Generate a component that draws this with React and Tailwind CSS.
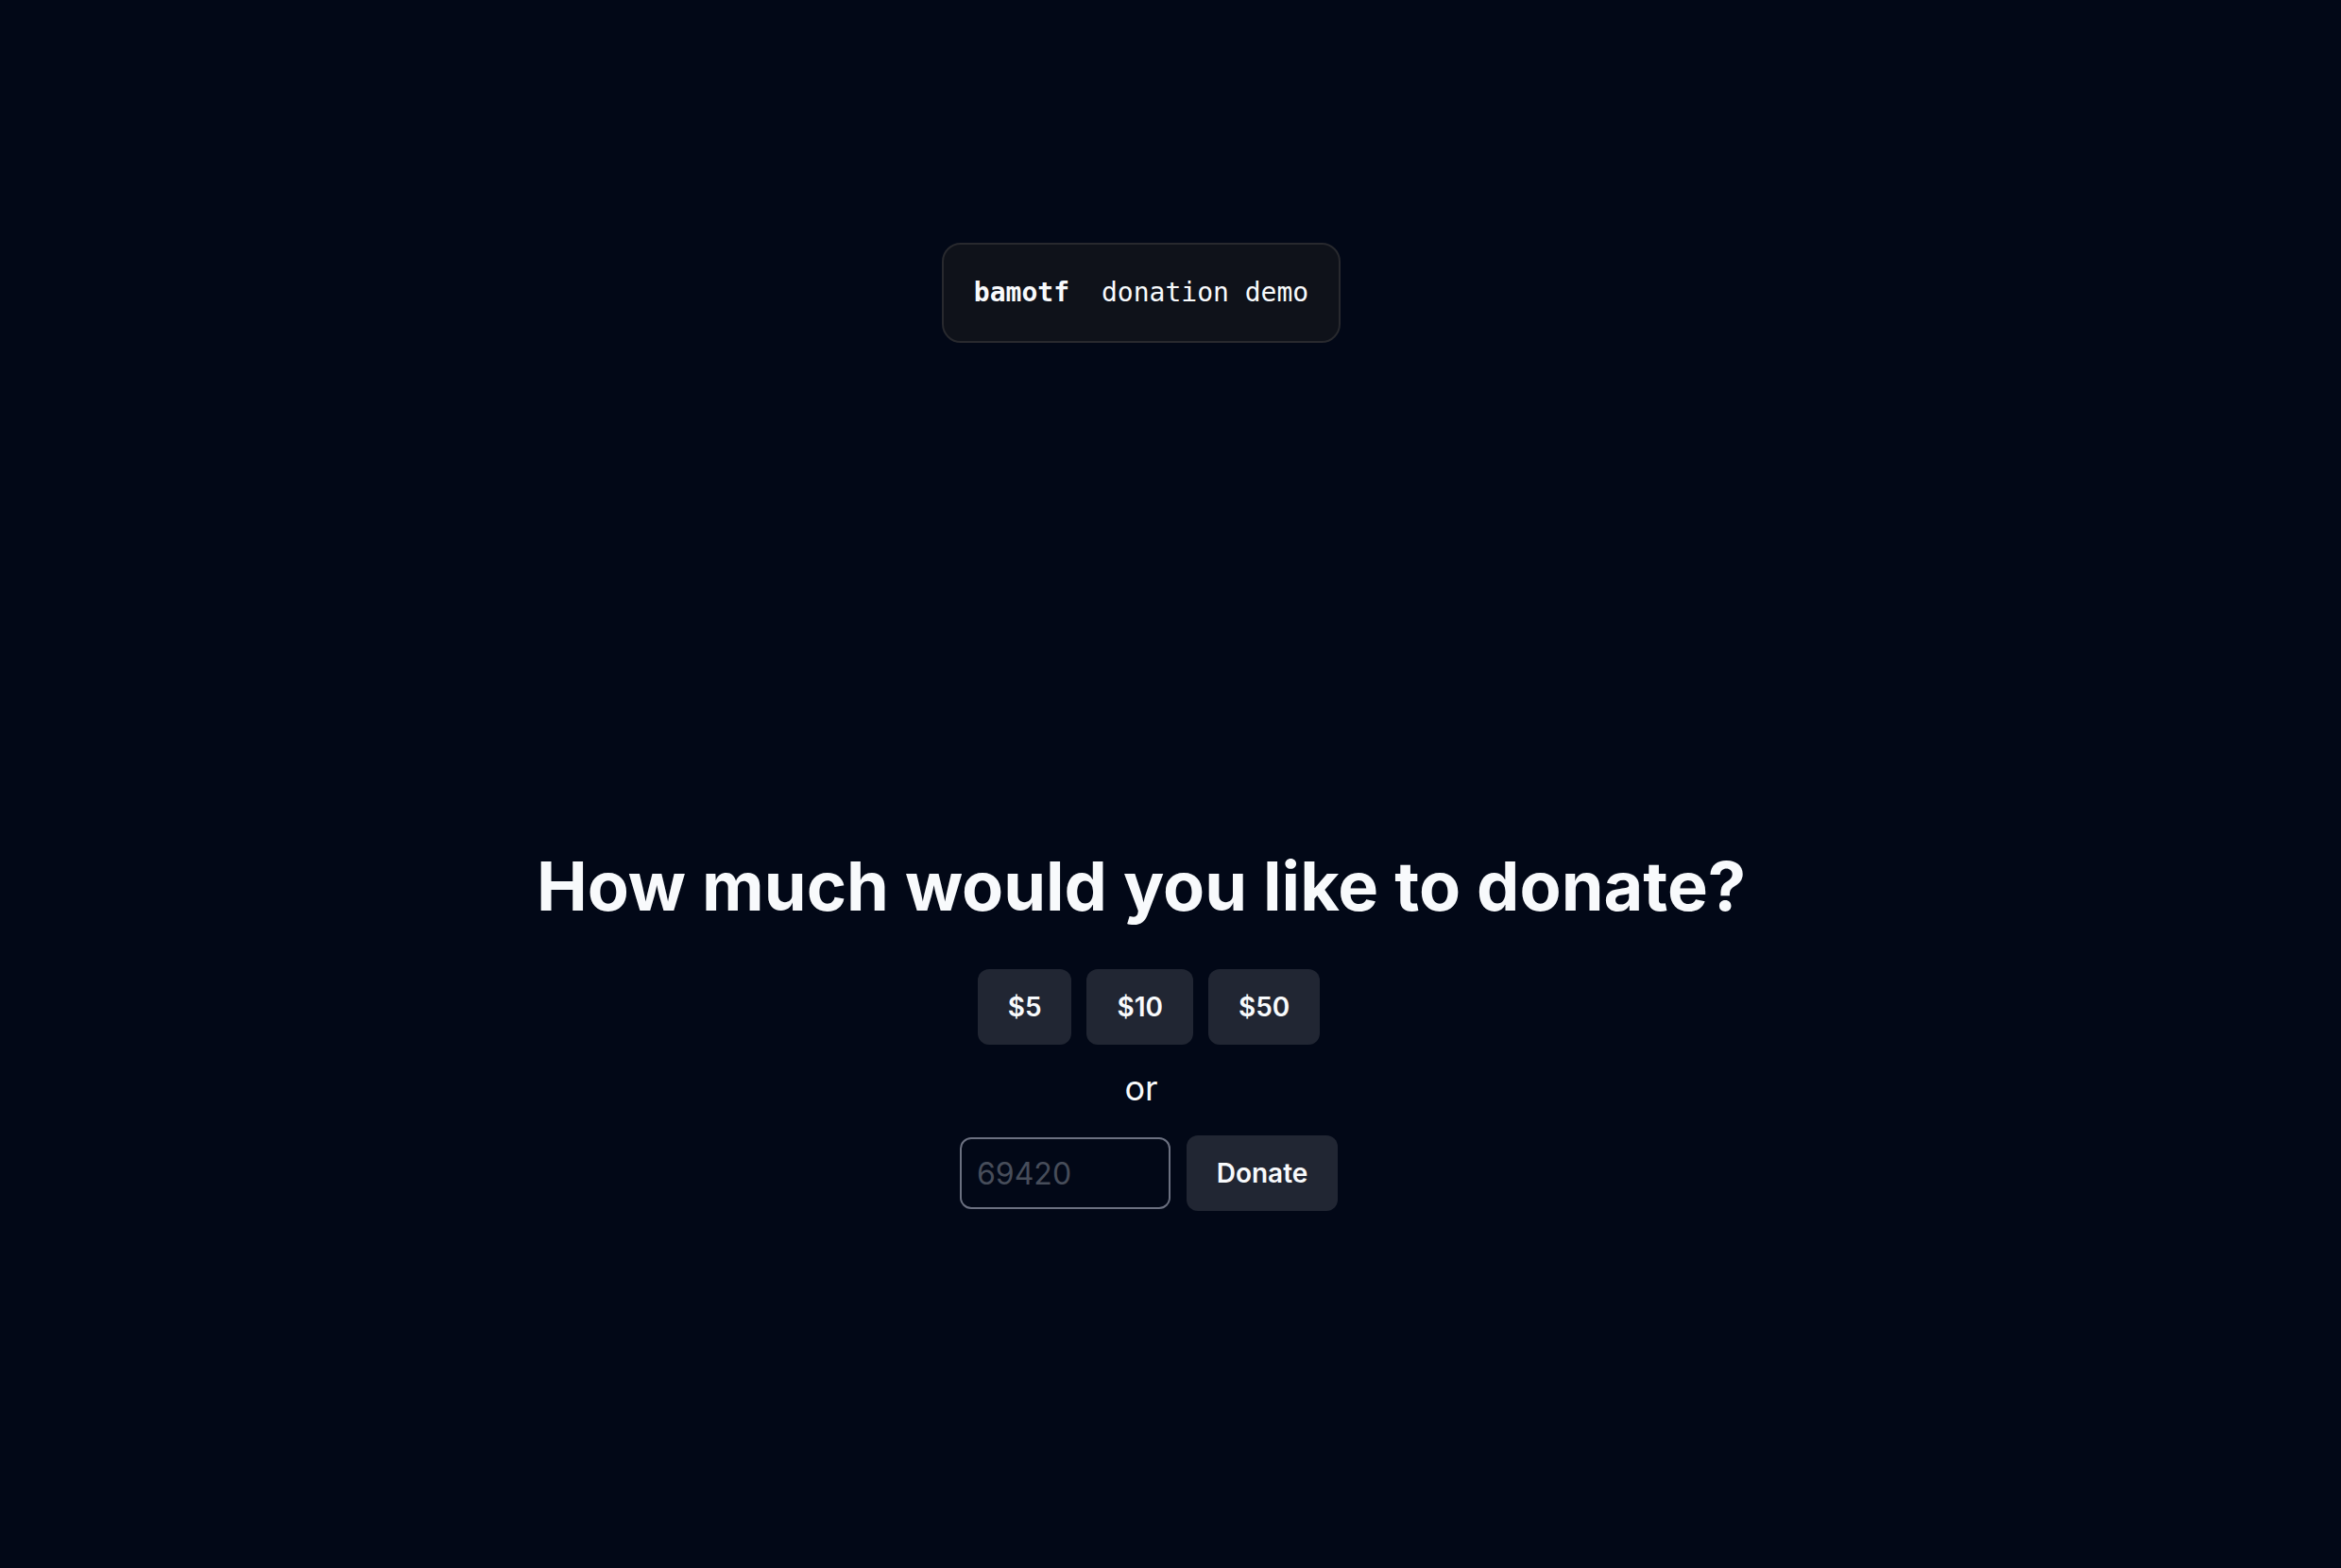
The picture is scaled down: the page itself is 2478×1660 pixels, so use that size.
import { useState } from 'react';

const amounts = [5, 10, 50];

export default function App() {
    const [amount, setAmount] = useState('');

    return (
        <div className="min-h-screen bg-[#020817] text-[#f8fafc] flex flex-col items-center pr-[62px] font-['Inter',sans-serif]">
            <div className="mt-[257px] flex items-center gap-[34px] rounded-[20px] border-2 border-[#28292e] bg-[#0f121a] px-[32px] py-[31px] font-['DejaVu_Sans_Mono',monospace] text-[28px] leading-[40px]">
                <span className="font-bold">bamotf</span>
                <span>donation demo</span>
            </div>

            <h1 className="mt-[535px] text-[72px] leading-[80px] font-bold">
                How much would you like to donate?
            </h1>

            <div className="mt-[48px] flex gap-[16px] pl-[16px]">
                {amounts.map(a => (
                    <button
                        key={a}
                        onClick={() => setAmount(String(a))}
                        className="h-[80px] rounded-[12px] bg-[#212633] px-[32px] text-[28px] font-semibold text-[#f8fafc]"
                    >
                        ${a}
                    </button>
                ))}
            </div>

            <p className="mt-[18px] text-[36px] leading-[56px]">or</p>

            <div className="mt-[22px] flex items-center gap-[17px] pl-[16px]">
                <input
                    type="number"
                    value={amount}
                    onChange={e => setAmount(e.target.value)}
                    placeholder="69420"
                    className="h-[76px] w-[223px] rounded-[12px] border-2 border-[#6b7080] bg-transparent px-[16px] text-[32px] text-[#f8fafc] placeholder:text-[#474d5a] outline-none"
                />
                <button className="h-[80px] w-[160px] rounded-[12px] bg-[#212633] text-[28px] font-semibold text-[#f8fafc]">
                    Donate
                </button>
            </div>
        </div>
    );
}
